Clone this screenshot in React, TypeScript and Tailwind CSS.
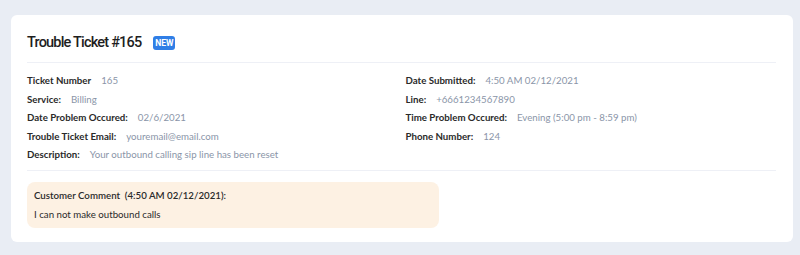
import React from 'react';

type Field = { label: string; value: string };

const leftFields: Field[] = [
    { label: 'Ticket Number', value: '165' },
    { label: 'Service:', value: 'Billing' },
    { label: 'Date Problem Occured:', value: '02/6/2021' },
    { label: 'Trouble Ticket Email:', value: 'youremail@email.com' },
    { label: 'Description:', value: 'Your outbound calling sip line has been reset' },
];

const rightFields: Field[] = [
    { label: 'Date Submitted:', value: '4:50 AM 02/12/2021' },
    { label: 'Line:', value: '+6661234567890' },
    { label: 'Time Problem Occured:', value: 'Evening (5:00 pm - 8:59 pm)' },
    { label: 'Phone Number:', value: '124' },
];

const FieldRow: React.FC<Field> = ({ label, value }) => (
    <div className="flex items-center gap-[10px] leading-[18.6px]">
        <span className="font-bold text-[#2a2a2a]">{label}</span>
        <span className="text-[#8a95a8]">{value}</span>
    </div>
);

const App: React.FC = () => {
    return (
        <div className="min-h-[255px] w-[800px] bg-[#e9edf4] pl-[11px] pr-[7px] pt-[15px] pb-[13px] font-['Lato',sans-serif] text-[9.7px]">
            <div className="bg-white rounded-md pl-4 pr-[17px] pt-4 pb-[14px]">
                <div className="flex items-center h-6">
                    <h1 className="font-['Roboto',sans-serif] text-[14.5px] font-medium tracking-[-0.8px] text-[#1e1e1e]">Trouble Ticket #165</h1>
                    <span className="ml-3 h-[14px] w-[22px] flex items-center justify-center rounded-[3px] bg-[#2f7ee6] font-['Roboto',sans-serif] text-[8.5px] font-bold text-white leading-none">NEW</span>
                </div>
                <div className="mt-[7px] border-t border-[#eef0f6]" />
                <div className="grid grid-cols-2 gap-x-2 pt-[8px] pb-[6px]">
                    <div className="flex flex-col">
                        {leftFields.map(f => <FieldRow key={f.label} {...f} />)}
                    </div>
                    <div className="flex flex-col">
                        {rightFields.map(f => <FieldRow key={f.label} {...f} />)}
                    </div>
                </div>
                <div className="border-t border-[#eef0f6]" />
                <div className="mt-[11px] w-[412px] rounded-lg bg-[#fdf1e3] px-[7px] py-[4px] text-[#2a2a2a]">
                    <div className="leading-[19px] font-semibold">Customer Comment&nbsp;&nbsp;(4:50 AM 02/12/2021):</div>
                    <div className="leading-[19px]">I can not make outbound calls</div>
                </div>
            </div>
        </div>
    );
};

export default App;
